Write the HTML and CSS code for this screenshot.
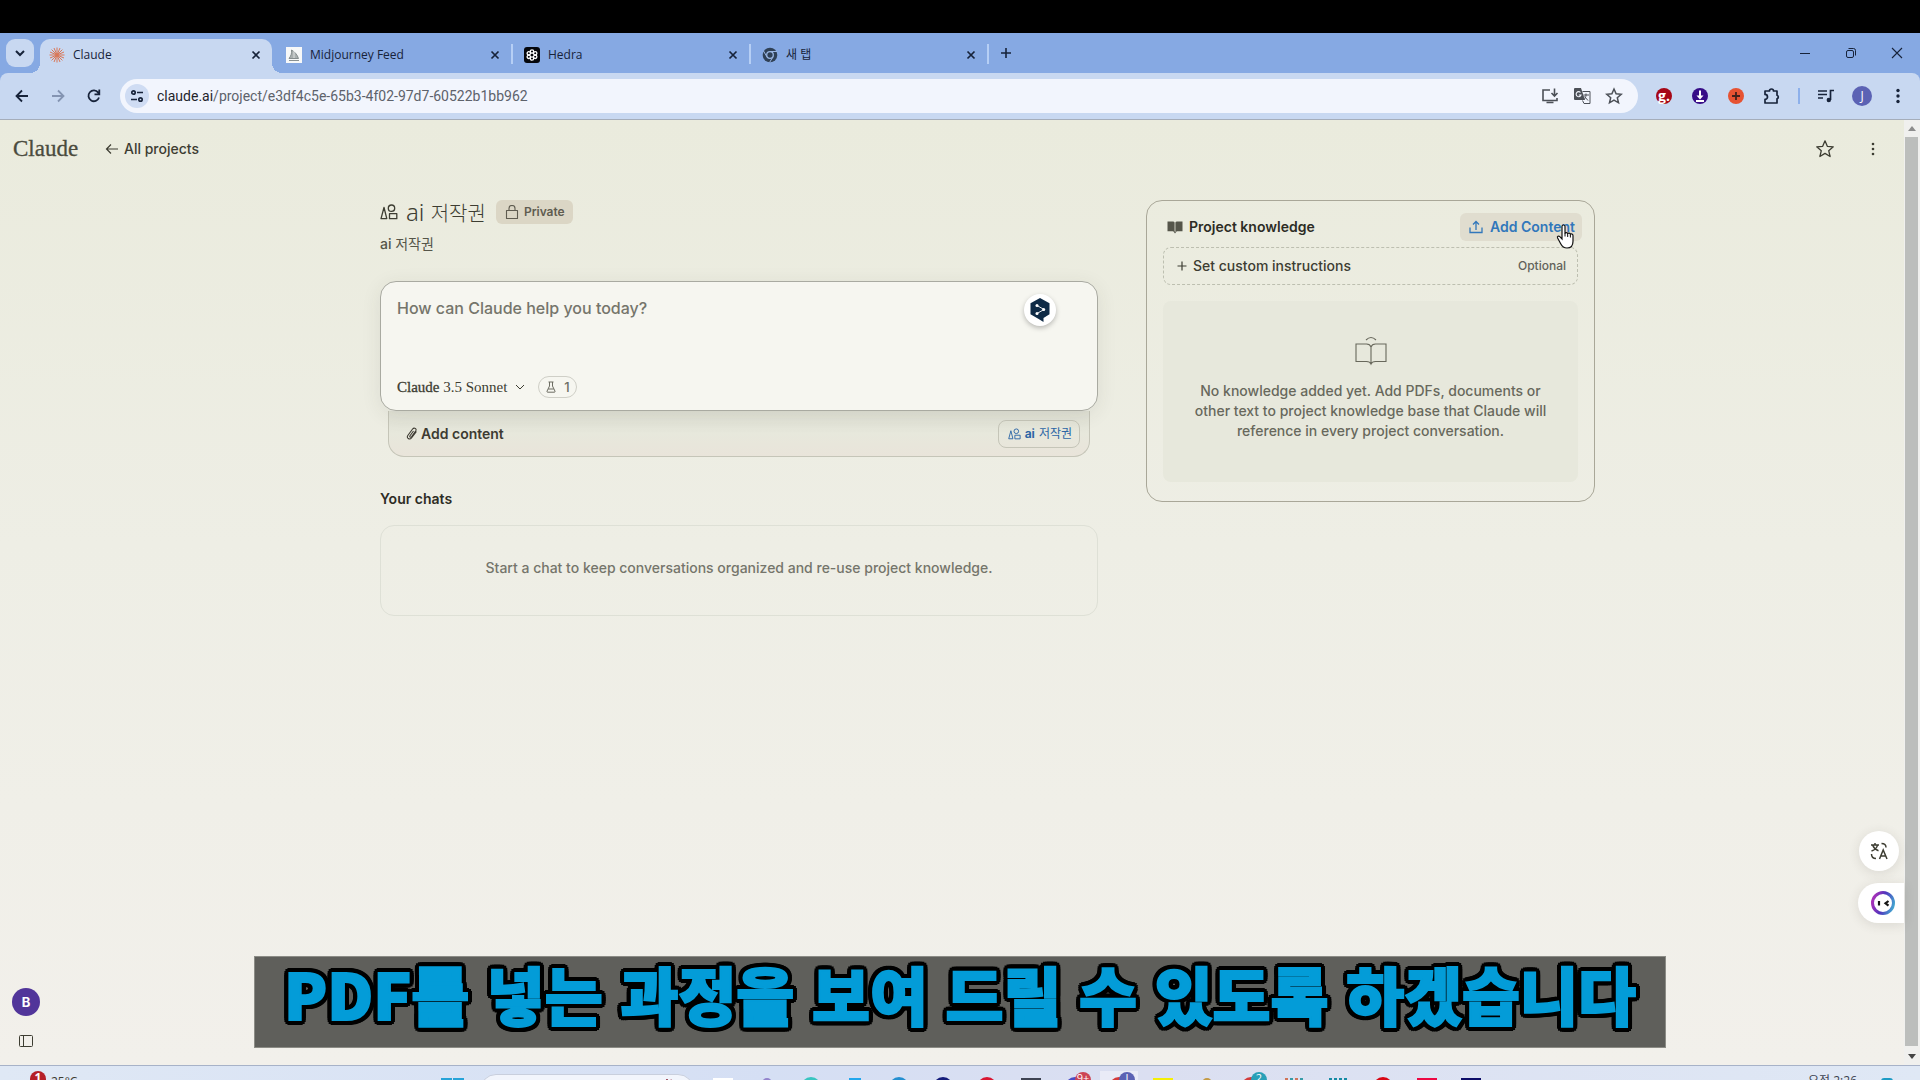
FILE: index.html
```html
<!DOCTYPE html>
<html lang="ko">
<head>
<meta charset="utf-8">
<title>Claude</title>
<link rel="stylesheet" href="styles.css">
</head>
<body>
<svg class="defs" aria-hidden="true">
  <symbol id="x" viewBox="0 0 10 10"><path d="M1.5 1.5l7 7M8.5 1.5l-7 7" fill="none" stroke="currentColor" stroke-width="1.7"/></symbol>
  <symbol id="shapes" viewBox="0 0 18 16"><path d="M4 3.500L1 14.600h5.800zM9.500 9.700h7.300v5H9.500z" fill="none" stroke="currentColor" stroke-width="1.3" stroke-linejoin="round"/><circle cx="11.500" cy="4.200" r="3.200" fill="none" stroke="currentColor" stroke-width="1.3"/></symbol>
</svg>
<div class="letterbox"></div>

<header class="browser">
  <div class="tabstrip">
    <button class="tab-search" aria-label="Search tabs"><svg width="12" height="12" viewBox="0 0 12 12"><path d="M2 4l4 4 4-4" fill="none" stroke="currentColor" stroke-width="2"/></svg></button>
    <div class="tab active">
      <svg width="16" height="16" viewBox="0 0 16 16"><path d="M8 0.5v15M0.5 8h15M2.6 2.6l10.8 10.8M13.4 2.6L2.6 13.4M5 1l6 14M11 1L5 15M1 5l14 6M15 5L1 11" stroke="#d97757" stroke-width="1"/></svg>
      <span class="tab-title">Claude</span>
      <button class="close" aria-label="Close tab"><svg width="10" height="10"><use href="#x"/></svg></button>
    </div>
    <div class="tab">
      <svg width="16" height="16" viewBox="0 0 16 16"><rect width="16" height="16" fill="#f7f8f8"/><path d="M3 11.5C5 9 6 6 5.500 3c3 1.500 6 5 7 8.500zM3 13.500h10" fill="#aab0b0" stroke="#7d8586" stroke-width=".9"/><path d="M8 4v7" stroke="#f7f8f8" stroke-width=".7"/></svg>
      <span class="tab-title">Midjourney Feed</span>
      <button class="close" aria-label="Close tab"><svg width="10" height="10"><use href="#x"/></svg></button>
    </div>
    <div class="tab">
      <svg width="16" height="16" viewBox="0 0 16 16"><rect width="16" height="16" rx="3" fill="#05070c"/><g fill="none" stroke="#fff" stroke-width="1.300"><circle cx="8" cy="4.500" r="1.700"/><circle cx="8" cy="11.500" r="1.700"/><circle cx="4.800" cy="6.300" r="1.700"/><circle cx="11.200" cy="6.300" r="1.700"/><circle cx="4.800" cy="9.800" r="1.700"/><circle cx="11.200" cy="9.800" r="1.700"/></g></svg>
      <span class="tab-title">Hedra</span>
      <button class="close" aria-label="Close tab"><svg width="10" height="10"><use href="#x"/></svg></button>
    </div>
    <div class="tab">
      <svg width="16" height="16" viewBox="0 0 16 16"><circle cx="8" cy="8" r="7.300" fill="#2f4055"/><circle cx="8" cy="8" r="3.300" fill="#2f4055" stroke="#9ab6e2" stroke-width="1.300"/><path d="M8 4.500h7M4.900 9.800L1.500 4M11 9.800l-3.400 5.600" stroke="#9ab6e2"/></svg>
      <span class="tab-title">새 탭</span>
      <button class="close" aria-label="Close tab"><svg width="10" height="10"><use href="#x"/></svg></button>
    </div>
    <button class="new-tab" aria-label="New tab"><svg width="12" height="12" viewBox="0 0 12 12"><path d="M6 1v10M1 6h10" stroke="currentColor" stroke-width="1.600"/></svg></button>
    <div class="window-buttons">
      <button aria-label="Minimize"><svg width="12" height="12" viewBox="0 0 12 12"><path d="M1 6.500h10" stroke="currentColor"/></svg></button>
      <button aria-label="Restore"><svg width="12" height="12" viewBox="0 0 12 12"><rect x="1.500" y="3.500" width="7" height="7" rx="1.500" fill="none" stroke="currentColor"/><path d="M3.500 1.500h5a2 2 0 0 1 2 2v5" fill="none" stroke="currentColor"/></svg></button>
      <button aria-label="Close window"><svg width="12" height="12" viewBox="0 0 12 12"><path d="M1 1l10 10M11 1L1 11" stroke="currentColor" stroke-width="1.100"/></svg></button>
    </div>
  </div>

  <div class="toolbar">
    <div class="nav">
      <button aria-label="Back"><svg width="16" height="16" viewBox="0 0 16 16"><path d="M14 8H3M8 2.500L2.500 8 8 13.500" fill="none" stroke="currentColor" stroke-width="1.800"/></svg></button>
      <button class="dim" aria-label="Forward"><svg width="16" height="16" viewBox="0 0 16 16"><path d="M2 8h11M8 2.500L13.500 8 8 13.500" fill="none" stroke="currentColor" stroke-width="1.800"/></svg></button>
      <button aria-label="Reload"><svg width="16" height="16" viewBox="0 0 16 16"><path d="M13 9.500A5.400 5.400 0 1 1 12.200 4.600L13 5.800M13.300 1.500v4.800H8.500" fill="none" stroke="currentColor" stroke-width="1.800"/></svg></button>
    </div>
    <div class="omnibox">
      <button class="site-info" aria-label="Site information"><svg width="14" height="14" viewBox="0 0 14 14"><g fill="none" stroke="currentColor" stroke-width="1.700"><circle cx="3.500" cy="3.500" r="1.700"/><path d="M7 3.500h6M1 10.500h6"/><circle cx="10.500" cy="10.500" r="1.700"/></g></svg></button>
      <div class="url">claude.ai<span>/project/e3df4c5e-65b3-4f02-97d7-60522b1bb962</span></div>
      <div class="omni-icons">
        <svg width="18" height="18" viewBox="0 0 18 18"><path d="M9 3H2v10.500h14V11M5.500 15.500h7M13.500 1.500v7M10.500 6l3 3 3-3" fill="none" stroke="currentColor" stroke-width="1.600"/></svg>
        <svg width="18" height="18" viewBox="0 0 18 18"><path d="M2 1h6l4 12H2a1 1 0 0 1-1-1V2a1 1 0 0 1 1-1z" fill="currentColor"/><path d="M9.500 4.500H17v12h-6l-1.500-3M10.500 8H16M13 6.500V8c0 2-1 3.500-2 4.500M11.500 9.500l3.500 4" fill="none" stroke="currentColor"/><path d="M7.500 5.500A2.500 2.500 0 1 0 8 8H5.800" fill="none" stroke="#f2f5fd" stroke-width="1.100"/></svg>
        <svg width="18" height="18" viewBox="0 0 18 18"><path d="M9 2l2.100 4.800 5.100.500-3.900 3.400 1.200 5.100L9 13.100l-4.500 2.700 1.200-5.100-3.900-3.400 5.100-.500z" fill="none" stroke="currentColor" stroke-width="1.500"/></svg>
      </div>
    </div>
    <div class="extensions">
      <button class="ext ext-g" aria-label="g.">g.</button>
      <button class="ext ext-dl" aria-label="Download"><svg width="16" height="16" viewBox="0 0 16 16"><path d="M8 2.500v7M4 13h8" stroke="#fff" stroke-width="2"/><path d="M4.500 7.500h7L8 11.500z" fill="#fff"/></svg></button>
      <button class="ext ext-plus" aria-label="Add"><svg width="16" height="16" viewBox="0 0 16 16"><path d="M8 4v8M4 8h8" stroke="#42211c" stroke-width="1.800"/></svg></button>
      <button class="ext" aria-label="Extensions"><svg width="18" height="18" viewBox="0 0 18 18"><path d="M2 4h4.500a2 2 0 0 1 4 0H14v4.200a1.900 1.900 0 0 1 0 3.600V16H2v-3.600a2.500 2.500 0 0 0 0-5z" fill="none" stroke="currentColor" stroke-width="1.700" stroke-linejoin="round"/></svg></button>
      <i class="divider"></i>
      <button class="ext" aria-label="Media"><svg width="18" height="18" viewBox="0 0 18 18"><path d="M1 4h9M1 7.500h9M1 11h5M13.500 13V3.500H17" fill="none" stroke="currentColor" stroke-width="1.700"/><circle cx="11.800" cy="13" r="2.200" fill="currentColor"/></svg></button>
      <button class="ext ext-user" aria-label="Profile">J</button>
      <button class="ext" aria-label="Menu"><svg width="16" height="18" viewBox="0 0 16 18"><g fill="currentColor"><circle cx="8" cy="3.500" r="1.700"/><circle cx="8" cy="9" r="1.700"/><circle cx="8" cy="14.500" r="1.700"/></g></svg></button>
    </div>
  </div>
</header>

<div class="viewport">
  <main class="page">
    <nav class="topbar">
      <a class="wordmark" href="#">Claude</a>
      <a class="back" href="#"><svg width="14" height="14" viewBox="0 0 14 14"><path d="M13 7H2M6 2.500L1.500 7 6 11.500" fill="none" stroke="currentColor" stroke-width="1.200"/></svg>All projects</a>
      <div class="top-actions">
        <button aria-label="Star project"><svg width="20" height="20" viewBox="0 0 20 20"><path d="M10 1.800l2.300 5.500 6 .500-4.600 3.900 1.400 5.800L10 14.400l-5.100 3.100 1.400-5.800L1.700 7.800l6-.500z" fill="none" stroke="currentColor" stroke-width="1.300" stroke-linejoin="round"/></svg></button>
        <button aria-label="Project menu"><svg width="20" height="20" viewBox="0 0 20 20"><g fill="currentColor"><circle cx="10" cy="5" r="1.300"/><circle cx="10" cy="10" r="1.300"/><circle cx="10" cy="15" r="1.300"/></g></svg></button>
      </div>
    </nav>

    <div class="columns">
      <section class="left">
        <div class="title-row">
          <svg width="18" height="16"><use href="#shapes"/></svg>
          <h1>ai <span>저작권</span></h1>
          <span class="private"><svg width="14" height="14" viewBox="0 0 14 14"><path d="M1.500 5.500h11v8h-11zM4 5.500v-2a3 3 0 0 1 6 0v2" fill="none" stroke="currentColor" stroke-width="1.100" stroke-linejoin="round"/></svg>Private</span>
        </div>
        <p class="subtitle">ai <span>저작권</span></p>

        <form class="composer">
          <div class="prompt">
            <textarea aria-label="Prompt" placeholder="How can Claude help you today?"></textarea>
            <div class="prompt-foot">
              <button type="button" class="model"><span><b>Claude</b> 3.5 Sonnet</span><svg width="10" height="8" viewBox="0 0 10 8"><path d="M1 2l4 4 4-4" fill="none" stroke="currentColor"/></svg></button>
              <button type="button" class="flask"><svg width="10" height="12" viewBox="0 0 10 12"><path d="M2.500 1h5M3.500 1v4L1 10.200q-.300 1 .600 1h6.800q.900 0 .600-1L6.500 5V1M2.200 8h5.600" fill="none" stroke="currentColor"/></svg>1</button>
            </div>
            <button type="button" class="deepl" aria-label="Translate"><svg width="20" height="24" viewBox="0 0 20 24"><path d="M10 0l9.500 5.300v11L13.500 20v4l-4-2.500L.5 16.300v-11z" fill="#0f2b46"/><path d="M7 7.500l7 4-7 4" fill="none" stroke="#fff" stroke-width=".9"/><g fill="#fff"><circle cx="7" cy="7.500" r="1.500"/><circle cx="13.700" cy="11.500" r="1.500"/><circle cx="7" cy="15.500" r="1.500"/></g></svg></button>
          </div>
          <div class="attach">
            <button type="button" class="add"><svg width="12" height="14" viewBox="0 0 12 14"><path d="M10.500 4.500L5.500 11c-2 2.200-5.300 0-3.700-2.500L6.600 2c1.600-2 4.400-.200 3.200 1.800L5.500 9.800c-.900 1-2.200.100-1.500-1L7.500 4" fill="none" stroke="currentColor" stroke-width="1.100"/></svg>Add content</button>
            <button type="button" class="chip"><svg width="13" height="12"><use href="#shapes"/></svg><b>ai</b><span>저작권</span></button>
          </div>
        </form>

        <h2>Your chats</h2>
        <div class="no-chats">Start a chat to keep conversations organized and re-use project knowledge.</div>
      </section>

      <aside class="knowledge">
        <div class="k-head">
          <h2><svg width="16" height="14" viewBox="0 0 16 14"><path d="M.500 1.500h5.500q1.300 0 1.600 1v9.500q-.800-.700-2-.700H.500zM15.500 1.500H10q-1.300 0-1.600 1v9.500q.800-.700 2-.700h5.100zM6.500 11.500h3L8 13.500z" fill="currentColor"/></svg>Project knowledge</h2>
          <button class="upload"><svg width="14" height="14" viewBox="0 0 14 14"><path d="M1 7.500v5h12v-5M7 10V1.500M4 4.500l3-3 3 3" fill="none" stroke="currentColor" stroke-width="1.300"/></svg>Add Content</button>
        </div>
        <button class="instructions"><svg width="10" height="10" viewBox="0 0 10 10"><path d="M5 .5v9M.5 5h9" stroke="currentColor" stroke-width="1.200"/></svg>Set custom instructions<small>Optional</small></button>
        <div class="k-empty">
          <svg width="32" height="30" viewBox="0 0 32 30"><path d="M1 8h10.500Q15 8 16 11q1-3 4.500-3H31v17.500H20.500Q17 25.500 16 28q-1-2.500-4.500-2.500H1zM16 11v16M11 4q5-5 10 0" fill="none" stroke="currentColor" stroke-width="1.100"/></svg>
          <p>No knowledge added yet. Add PDFs, documents or other text to project knowledge base that Claude will reference in every project conversation.</p>
        </div>
      </aside>
    </div>

    <div class="side-foot">
      <button class="account" aria-label="Account">B</button>
      <button aria-label="Toggle sidebar"><svg width="14" height="12" viewBox="0 0 14 12"><rect x=".5" y=".5" width="13" height="11" rx="1" fill="none" stroke="currentColor"/><path d="M4.500 1v10" stroke="currentColor"/></svg></button>
    </div>
    <div class="floating">
      <button class="fl-round" aria-label="Translate page"><svg width="18" height="18" viewBox="0 0 18 18"><path d="M1 3h8M5 1v2M7.500 3C7 6 4.500 8 1.500 9M2.800 3.500C4 6.500 6 8 8.500 8.800M11.500 1.500c3 0 4.500 1.500 4.500 4M1.500 12c0 3 1.500 4.500 4.500 4.500M9.500 17l3.700-9L17 17M10.800 14h5" fill="none" stroke="currentColor" stroke-width="1.500"/></svg></button>
      <button class="fl-tab" aria-label="Assistant"><svg width="24" height="24" viewBox="0 0 24 24"><defs><linearGradient id="ring" x1="0" y1=".5" x2="1" y2=".8"><stop offset="0" stop-color="#a331b8"/><stop offset=".45" stop-color="#5036bd"/><stop offset="1" stop-color="#43a9d1"/></linearGradient></defs><circle cx="12" cy="12" r="10.500" fill="#fff" stroke="url(#ring)" stroke-width="3"/><path d="M8 10v4.500M17.500 10l-3 2.300 3 2.300" fill="none" stroke="#161616" stroke-width="2.200"/></svg></button>
    </div>
    <svg class="pointer" width="20" height="26" viewBox="0 0 20 26"><path d="M6 2.500c0-2 3-2 3 0v7c.300-1.400 2.600-1.200 2.700.300.500-1 2.500-.800 2.700.600.700-.900 2.600-.500 2.600 1.300v5.500c0 4-2.200 6.800-6 6.800-3.500 0-5-1.700-6.300-4.200L1.600 14c-.800-1.600 1-2.600 2.200-1.400L6 15z" fill="#fff" stroke="#111" stroke-width="1.200"/><path d="M9 9v3.500M11.700 10.500v2.500M14.400 11v2.500" stroke="#111"/></svg>
  </main>
  <div class="scrollbar"><i class="up"></i><div class="thumb"></div><i class="down"></i></div>
</div>

<footer class="taskbar">
  <div class="weather"><b>1</b><span>25°C</span></div>
  <div class="start"><i></i><i></i></div>
  <div class="search"><svg width="16" height="8" viewBox="0 0 16 8"><path d="M2 6l2-3 2 3 2-5 2 4 2-3 2 4" fill="none" stroke="#973b4b" stroke-width="2"/></svg></div>
  <div class="apps">
    <i class="sq white"></i><i class="dot violet"></i><i class="ci teal"></i><i class="sq sky small"></i><i class="ci blue"></i><i class="ci navy"></i><i class="ci crimson"></i><i class="sq slate"></i>
    <span class="cell"><i class="ci indigo"></i><em>9+</em></span>
    <span class="cell current"><i class="ci red"></i><em class="j">J</em></span>
    <i class="sq yellow"></i><i class="dot gold"></i>
    <span class="cell"><i class="ci red"></i><em class="aqua">2</em></span>
    <i class="sq bars"></i><i class="sq combs"></i><i class="ci bright"></i><i class="sq pink"></i><i class="sq ink"></i>
  </div>
  <div class="clock">오전 2:26</div>
  <i class="bell"></i>
</footer>

<div class="caption">PDF를 넣는 과정을 보여 드릴 수 있도록 하겠습니다</div>
</body>
</html>
```
FILE: styles.css
```css
* { box-sizing: border-box; }
body { margin: 0; height: 100vh; display: flex; flex-direction: column; overflow: hidden; position: relative; font: 500 14px/20px Inter, "Noto Sans CJK KR", sans-serif; color: #3d3d32; background: #eeeee5; }
button { font: inherit; color: inherit; background: none; border: 0; padding: 0; display: flex; align-items: center; justify-content: center; }
a { color: inherit; text-decoration: none; }
h1, h2, p { margin: 0; }
svg { display: block; flex: none; }
.defs { position: absolute; width: 0; height: 0; }
.letterbox { height: 33px; background: #000; flex: none; }

/* browser chrome */
.browser { flex: none; background: #86a9e3; color: #17233a; font: 400 12px/16px "Open Sans", "Noto Sans CJK KR", sans-serif; }
.tabstrip { display: flex; align-items: center; height: 40px; padding: 6px 0 0 6px; }
.tab-search { width: 28px; height: 28px; margin: 0 6px 6px 0; border-radius: 9px; background: #c8d8f1; }
.tab { position: relative; width: 238px; height: 34px; padding: 0 10px 2px 14px; display: flex; align-items: center; gap: 8px; }
.tab.active { width: 232px; padding-left: 9px; padding-right: 11px; background: #c8d8f1; border-radius: 10px 10px 0 0; }
.tab.active::before, .tab.active::after { content: ""; position: absolute; bottom: 0; width: 10px; height: 10px; background: radial-gradient(circle at 0 0, transparent 10px, #c8d8f1 10px); left: -10px; }
.tab.active::after { left: auto; right: -10px; background: radial-gradient(circle at 100% 0, transparent 10px, #c8d8f1 10px); }
.tab:not(.active)::after { content: ""; position: absolute; right: -3px; top: 5px; width: 2px; height: 20px; background: #b6cff5; }
.tab-title { flex: 1; }
.new-tab { width: 24px; height: 28px; margin: 0 0 6px 8px; }
.window-buttons { display: flex; margin: 0 0 6px auto; }
.window-buttons button { width: 46px; height: 28px; }
.toolbar { display: flex; align-items: center; height: 47px; background: #c8d8f1; border-bottom: 1px solid #a5adba; border-radius: 8px 8px 0 0; }
.nav { display: flex; padding-left: 4px; width: 120px; }
.nav button { width: 36px; height: 28px; }
.dim { color: #8494b2; }
.omnibox { flex: 1; display: flex; align-items: center; height: 34px; border-radius: 17px; background: #f2f5fd; padding: 0 15px 0 5px; gap: 8px; }
.site-info { width: 24px; height: 24px; border-radius: 12px; background: #cfdcf3; }
.url { flex: 1; font: 400 14px/20px Roboto, sans-serif; color: #1f232b; }
.url span { color: #5d626b; }
.omni-icons { display: flex; gap: 14px; color: #4c5057; }
.extensions { display: flex; align-items: center; gap: 16px; padding: 0 12px 0 16px; }
.ext { width: 20px; height: 20px; border-radius: 10px; }
.ext-g, .ext-dl, .ext-plus { width: 16px; height: 16px; margin: 0 2px; border-radius: 8px; color: #fff; background: #a60716; font: 700 14px/14px "Open Sans", sans-serif; }
.ext-dl { background: #360c87; }
.ext-plus { background: #e65232; }
.ext-user { background: #5b62b4; color: #fff; font-size: 12px; }
.divider { width: 2px; height: 16px; background: #8db0eb; }

/* page */
.viewport { flex: 1; min-height: 0; display: flex; }
.page { position: relative; flex: 1; background: linear-gradient(#eaebdd, #eeeee5 45%, #f2f0eb); }
.topbar { display: flex; align-items: center; height: 58px; padding: 0 21px 0 13px; }
.wordmark { font: 400 23px/28px "Liberation Serif", serif; color: #4b4b3e; width: 92px; -webkit-text-stroke: 0.3px #4b4b3e; }
.back { display: flex; align-items: center; gap: 5px; }
.top-actions { display: flex; gap: 28px; margin-left: auto; }
.columns { display: grid; grid-template-columns: 718fr 449fr; gap: 48px; align-items: start; padding: 22px 309px 0 380px; }
.title-row { display: flex; align-items: center; gap: 8px; height: 24px; }
h1 { font: 300 24px/24px "Noto Sans", sans-serif; }
h1 span { font: 300 20px/24px "Noto Sans CJK KR", sans-serif; }
.private { display: flex; align-items: center; gap: 5px; height: 24px; margin-left: 2px; padding: 0 8px 0 9px; border-radius: 6px; background: #dbd6c5; font-size: 12px; font-weight: 600; color: #5f5c50; }
.subtitle { margin-top: 10px; color: #55554a; }
.subtitle span, .chip span { font-weight: 400; }
.composer { margin-top: 27px; }
.prompt { position: relative; display: flex; flex-direction: column; height: 130px; padding: 14px 16px 12px; border: 1px solid #a9aaa1; border-radius: 16px; background: #f6f6f0; box-shadow: 0 4px 20px rgba(60, 60, 40, .09); }
textarea { flex: 1; border: 0; padding: 0; resize: none; outline: 0; background: none; font: 500 16px/24px Inter, sans-serif; }
textarea::placeholder { color: #75756b; opacity: 1; }
.prompt-foot { display: flex; gap: 13px; align-items: center; }
.model { font: 400 15px/20px "Liberation Serif", serif; gap: 8px; }
.model b { font-weight: 400; -webkit-text-stroke: 0.3px #3d3d32; }
.flask { width: 39px; height: 22px; border: 1px solid #cfcfc7; border-radius: 11px; gap: 8px; font-size: 13px; color: #6c6c62; }
.deepl { position: absolute; top: 12px; right: 41px; width: 32px; height: 32px; border-radius: 16px; background: #fff; box-shadow: 0 2px 5px rgba(0, 0, 0, .25); }
.attach { display: flex; justify-content: space-between; align-items: center; height: 46px; margin: 0 8px; padding: 0 9px 0 17px; border: 1px solid #c5c5b8; border-top: 0; border-radius: 0 0 16px 16px; background: linear-gradient(#dfe0d4, #e7e8dc 50%, #e9e4da); }
.add { gap: 3px; font-weight: 600; color: #3d3b32; }
.chip { height: 28px; padding: 0 7px 0 9px; gap: 4px; border: 1px solid #c5c5b8; border-radius: 8px; font-size: 12px; color: #2d66a6; }
h2 { font-size: 14px; line-height: 20px; font-weight: 600; color: #2d2c25; display: flex; align-items: center; gap: 6px; }
.left h2 { margin: 32px 0 16px; }
.no-chats { padding: 32px 20px 37px; text-align: center; border: 1px solid #dee0d6; border-radius: 14px; color: #75756b; }
.knowledge { border: 1px solid #a9a798; border-radius: 16px; padding: 12px 12px 19px 16px; }
.k-head { display: flex; align-items: center; justify-content: space-between; height: 28px; padding-left: 4px; }
.k-head h2 svg { color: #55554a; }
.upload { height: 28px; padding: 0 7px 0 9px; gap: 7px; border-radius: 6px; background: #e0ddcf; font-weight: 600; color: #3177bb; }
.instructions { width: calc(100% - 4px); height: 38px; margin-top: 6px; padding: 0 11px 0 13px; gap: 6px; justify-content: flex-start; border: 1px dashed #bdbfb0; border-radius: 8px; }
small { font-size: 12px; margin-left: auto; color: #62625a; }
.k-empty { margin: 16px 4px 0 0; padding: 35px 24px 41px; display: flex; flex-direction: column; align-items: center; gap: 15px; border-radius: 8px; background: #e7e8dc; text-align: center; color: #68685c; }
.side-foot { position: absolute; left: 12px; bottom: 18px; display: flex; flex-direction: column; align-items: center; gap: 19px; }
.account { width: 28px; height: 28px; border-radius: 14px; background: #51359a; color: #fff; font-weight: 700; font-size: 13px; }
.floating { position: absolute; right: 0; bottom: 142px; display: flex; flex-direction: column; align-items: flex-end; gap: 12px; }
.floating button { height: 40px; background: #fff; box-shadow: 0 2px 12px rgba(60, 50, 40, .12); }
.fl-round { width: 40px; margin-right: 5px; border-radius: 20px; }
.floating .fl-tab { width: 46px; padding-left: 4px; border-radius: 20px 0 0 20px; }
.pointer { position: absolute; left: 1556px; top: 104px; }
.scrollbar { width: 16px; padding: 6px 2px 6px 1px; display: flex; flex-direction: column; align-items: center; background: #f0f0ee; }
.up, .down { border: 4px solid transparent; border-bottom: 5px solid #8c8c8c; border-top: 0; }
.down { border-top: 5px solid #444; border-bottom: 0; }
.thumb { flex: 1; width: 13px; margin: 6px 0 8px; background: #bcbebc; }

/* Windows taskbar, only its top edge is on screen */
.taskbar { flex: none; display: flex; align-items: flex-start; height: 15px; overflow: hidden; border-top: 1px solid #a7b2c8; background: linear-gradient(90deg, #dfe8f5, #d5dff4 40%, #dbdff1 60%, #dfe8f5); }
.weather { display: flex; width: 441px; padding: 5px 0 0 30px; gap: 5px; font: 400 12px/14px "Open Sans", sans-serif; }
.weather b { width: 16px; height: 16px; border-radius: 8px; background: #b51f28; color: #fff; text-align: center; }
.weather span { padding-top: 4px; }
.start { display: flex; gap: 1px; width: 39px; padding-top: 12px; }
.start i { width: 11px; height: 11px; background: #27a3d8; }
.search { width: 214px; height: 32px; margin-top: 8px; padding: 4px 18px; display: flex; justify-content: flex-end; border: 1px solid #c9cfdd; border-radius: 16px; background: #f2f5fc; }
.apps { display: flex; padding-left: 7px; }
.apps > * { width: 44px; height: 30px; }
.apps i { position: relative; }
.apps i::before { content: ""; display: block; width: 20px; height: 20px; margin: 12px auto 0; background: var(--c); }
.apps .small::before { width: 12px; }
.apps .ci::before { border-radius: 10px; margin-top: 11px; }
.apps .dot::before { width: 10px; border-radius: 5px; }
.white { --c: #fff; } .violet { --c: #9384cc; } .teal { --c: #38c5c0; } .sky { --c: #22a7ed; } .blue { --c: #258fd0; } .navy { --c: #141c7a; } .crimson { --c: #d91632; } .slate { --c: #3e4352; } .indigo { --c: #4a4cc6; } .red { --c: #d33b3b; } .yellow { --c: #f5ef05; } .gold { --c: #c59b45; } .bright { --c: #d80613; } .pink { --c: #ed0843; } .ink { --c: #0d0d68; }
.bars { --c: repeating-linear-gradient(90deg, #d07458 0 3px, transparent 3px 5px, #379ca8 5px 8px, transparent 8px 10px); }
.combs { --c: repeating-linear-gradient(90deg, #168ba4 0 3px, transparent 3px 5px); }
.cell { position: relative; }
.cell em { position: absolute; left: 22px; top: 6px; width: 16px; height: 16px; border-radius: 8px; background: #cc4454; color: #fff; font: 400 11px/12px "Open Sans", sans-serif; text-align: center; }
.cell .j { background: #5b62b4; }
.cell .aqua { background: #29a0b8; }
.current { background: linear-gradient(#e9ebf7, #e9ebf7) center 5px / 38px 30px no-repeat; }
.clock { margin: 7px 24px 0 auto; font: 400 12px/16px "Open Sans", "Noto Sans CJK KR", sans-serif; color: #3b4150; }
.bell { width: 12px; height: 12px; margin: 12px 27px 0 0; border-radius: 3px; background: #1d9bc5; }

/* video subtitle; the ring of shadows is its round-cornered outline */
.caption {
  position: absolute; left: 254px; right: 254px; bottom: 32px; height: 92px;
  border: 1px solid #8c8c86; background: #5f5f5b; color: #039cd8;
  font: 900 63px/72px "Noto Sans CJK KR", sans-serif; text-align: center; white-space: nowrap;
  -webkit-text-stroke: 2px #039cd8;
  text-shadow: 5px 0 #000, -5px 0 #000, 0 5px #000, 0 -5px #000, 4px 4px #000, -4px 4px #000, 4px -4px #000, -4px -4px #000, 5px 2px #000, 5px -2px #000, -5px 2px #000, -5px -2px #000, 2px 5px #000, -2px 5px #000, 2px -5px #000, -2px -5px #000;
}
```
